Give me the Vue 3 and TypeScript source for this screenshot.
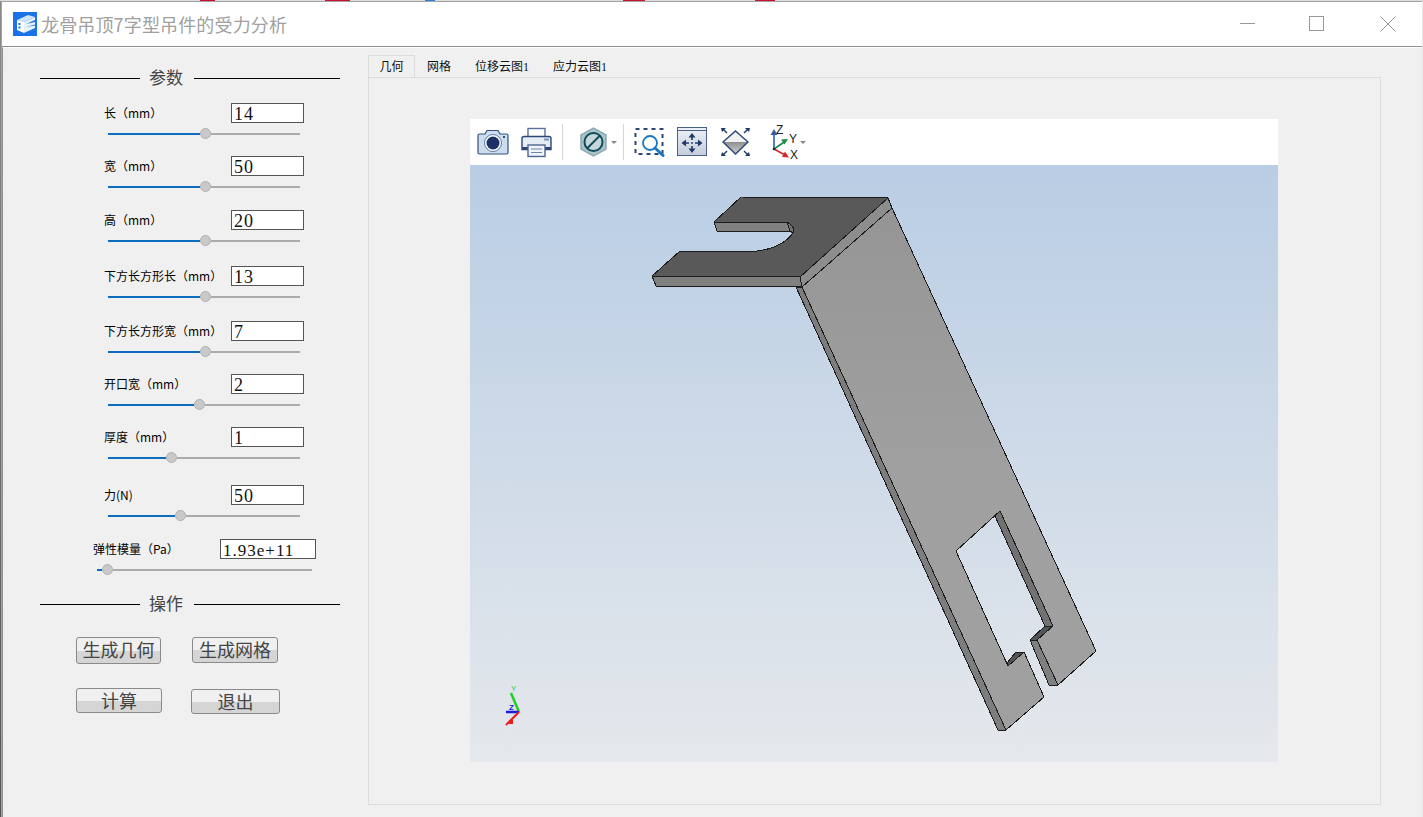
<template>
  <div class="window">
    <header class="titlebar">
      <svg class="app-icon" width="24" height="24" viewBox="0 0 24 24">
        <rect width="24" height="24" fill="#1a73e8" />
        <path d="M4 8 L15 3 L22 5 L11 10 Z" fill="#cfe3fb" />
        <path d="M4 8 L11 10 V21 L4 18 Z" fill="#fff" />
        <path d="M11 10 L22 5 V8 L13 12 L22 10 V12.500 L13 15 L22 13.500 V16 L11 21 Z" fill="#e6f0fd" />
        <path d="M5.500 11 h2 v2 h-2 z M5.500 14.500 h2 v2 h-2 z" fill="#1a73e8" />
      </svg>
      <span class="title">龙骨吊顶7字型吊件的受力分析</span>
      <div class="controls">
        <svg width="16" height="16" viewBox="0 0 16 16"><path d="M0 7.500 H15" stroke="#999" fill="none" /></svg>
        <svg width="16" height="16" viewBox="0 0 16 16"><rect x="0.500" y="0.500" width="14" height="14" stroke="#999" fill="none" /></svg>
        <svg width="16" height="16" viewBox="0 0 16 16"><path d="M0.500 0.500 L15.500 15.500 M15.500 0.500 L0.500 15.500" stroke="#999" fill="none" /></svg>
      </div>
    </header>

    <main class="body">
      <aside class="side">
        <div class="heading heading--params"><i></i><span>参数</span><i></i></div>

        <div
          v-for="row in rows"
          :key="row.label"
          class="row"
          :class="{ 'row--wide': row.wide }"
          :style="{ marginTop: row.gap + 'px' }"
        >
          <div class="row__top">
            <label class="row__label">{{ row.label }}</label>
            <input class="row__input" :value="row.value" readonly />
          </div>
          <div class="slider">
            <div class="slider__fill" :style="{ width: row.fill + 'px' }"></div>
            <div class="slider__thumb"></div>
            <div class="slider__rest"></div>
          </div>
        </div>

        <div class="heading heading--ops"><i></i><span>操作</span><i></i></div>

        <div class="btns btns--first">
          <button class="btn btn--geo">生成几何</button>
          <button class="btn btn--mesh">生成网格</button>
        </div>
        <div class="btns btns--second">
          <button class="btn btn--calc">计算</button>
          <button class="btn btn--exit">退出</button>
        </div>
      </aside>

      <section class="tabs">
        <div class="tabs__bar">
          <div v-for="(tab, i) in tabs" :key="tab" class="tab" :class="{ 'is-active': i === 0 }">{{ tab }}</div>
        </div>
        <div class="pane">
          <div class="viewer">
            <div class="toolbar">
              <!-- camera -->
              <svg class="tool t-camera" width="32" height="32" viewBox="0 0 32 32">
                <path d="M2.500 8 H8 L10 4.500 H21 L23 8 H29.500 Q31 8 31 9.500 V26.500 Q31 28 29.500 28 H2.500 Q1 28 1 26.500 V9.500 Q1 8 2.500 8 Z" fill="#cddcee" stroke="#34507f" stroke-width="1.200" />
                <circle cx="16" cy="17" r="8.500" fill="#fff" stroke="#5b7aa8" />
                <circle cx="16" cy="17" r="6.500" fill="#1c2f66" />
                <rect x="26" y="10" width="2" height="2" fill="#34507f" />
              </svg>
              <!-- printer -->
              <svg class="tool t-printer" width="31" height="32" viewBox="0 0 31 32">
                <rect x="7" y="2.500" width="17" height="9" fill="#fff" stroke="#5a7096" stroke-width="1.400" />
                <path d="M3 10.500 H28 Q30 10.500 30 12.500 V23.500 H1 V12.500 Q1 10.500 3 10.500 Z" fill="#e6ecf4" stroke="#2c4675" stroke-width="1.400" />
                <rect x="23" y="12.500" width="5" height="2" fill="#7f93b1" />
                <path d="M1 21 H30 V23.500 H1 Z" fill="#2c4675" />
                <rect x="7" y="19" width="17" height="11.500" fill="#f0f3f8" stroke="#4e6590" stroke-width="1.400" />
                <path d="M10 23 H21 M10 26.500 H21" stroke="#6f84a6" stroke-width="1.200" />
              </svg>
              <div class="sep sep--a"></div>
              <!-- section hex -->
              <svg class="tool t-hex" width="28" height="32" viewBox="0 0 28 32">
                <path d="M13.500 2 L26 9 V23 L13.500 30 L1 23 V9 Z" fill="#aac2ca" stroke="#88a4ad" stroke-width="1.400" />
                <circle cx="13.500" cy="16" r="9" fill="#c6d6db" stroke="#0f4b58" stroke-width="2" />
                <path d="M7.500 22 L19.500 10" stroke="#0f4b58" stroke-width="2" />
              </svg>
              <svg class="tool t-caret" width="6" height="32" viewBox="0 0 6 32"><path d="M0 15 H6 L3 18 Z" fill="#888" /></svg>
              <div class="sep sep--b"></div>
              <!-- zoom box -->
              <svg class="tool t-zoom" width="31" height="32" viewBox="0 0 31 32">
                <rect x="1.500" y="3" width="27" height="25" fill="none" stroke="#2c4675" stroke-width="2" stroke-dasharray="4 4" />
                <circle cx="16" cy="17" r="7" fill="#fff" stroke="#1b78bd" stroke-width="1.800" />
                <path d="M21 22 L29 29.500" stroke="#1b78bd" stroke-width="3" stroke-linecap="round" />
              </svg>
              <!-- pan -->
              <svg class="tool t-pan" width="30" height="32" viewBox="0 0 30 32">
                <defs>
                  <linearGradient id="panFill" x1="0" y1="0" x2="0" y2="1">
                    <stop offset="0" stop-color="#eef1f6" />
                    <stop offset="1" stop-color="#c3cddc" />
                  </linearGradient>
                </defs>
                <rect x="0.500" y="1.500" width="29" height="28" fill="url(#panFill)" stroke="#4a6288" />
                <path d="M0.500 4.500 H29.500" stroke="#4a6288" />
                <path d="M15 10 V14 M15 20 V24 M7 17 H12 M18 17 H23" stroke="#1f3a68" stroke-width="1.600" />
                <circle cx="15" cy="17" r="0.900" fill="#1f3a68" />
                <path d="M15 7 L11.500 11.500 H18.500 Z M15 27 L11.500 22.500 H18.500 Z M4.500 17 L9 13.500 V20.500 Z M25.500 17 L21 13.500 V20.500 Z" fill="#1f3a68" />
              </svg>
              <!-- fit -->
              <svg class="tool t-fit" width="31" height="32" viewBox="0 0 31 32">
                <defs>
                  <linearGradient id="fitLow" x1="0" y1="0" x2="0" y2="1">
                    <stop offset="0" stop-color="#8e8e8e" />
                    <stop offset="1" stop-color="#d2d2d2" />
                  </linearGradient>
                </defs>
                <path d="M15.500 5 L28 16 H3 Z" fill="#f1f1f1" />
                <path d="M3 16 H28 L15.500 28 Z" fill="url(#fitLow)" />
                <path d="M15.500 5 L28 16 L15.500 28 L3 16 Z" fill="none" stroke="#2c4675" stroke-width="1.400" />
                <path d="M1 2 H6 L4.500 3.500 L7.500 6.500 L6.500 7.500 L3.500 4.500 L2 6 Z M30 2 H25 L26.500 3.500 L23.500 6.500 L24.500 7.500 L27.500 4.500 L29 6 Z M1 30 H6 L4.500 28.500 L7.500 25.500 L6.500 24.500 L3.500 27.500 L2 26 Z M30 30 H25 L26.500 28.500 L23.500 25.500 L24.500 24.500 L27.500 27.500 L29 26 Z" fill="#1f3a68" />
              </svg>
              <!-- axes -->
              <svg class="tool t-axes" width="38" height="36" viewBox="0 0 38 36">
                <g transform="translate(0 2)">
                  <path d="M4 23 V7" stroke="#2f5fae" stroke-width="1.600" />
                  <path d="M4 3 L0.500 9 H7.500 Z" fill="#2f5fae" />
                  <path d="M4 23 L15 15.500" stroke="#1b8c4a" stroke-width="1.600" />
                  <path d="M18 13 L11 13.500 L14.500 18.500 Z" fill="#1b8c4a" />
                  <path d="M4 23 L15 29" stroke="#d9262b" stroke-width="1.600" />
                  <path d="M19 31.500 L12 31 L15 25.500 Z" fill="#d9262b" />
                  <circle cx="4" cy="23" r="1.300" fill="#222" />
                  <path d="M30 15 H36 L33 18 Z" fill="#888" />
                </g>
                <text x="6" y="9.500" class="axis-text">Z</text>
                <text x="19" y="18.500" class="axis-text">Y</text>
                <text x="20" y="34.500" class="axis-text">X</text>
              </svg>
            </div>

            <div class="canvas">
              <!-- canvas origin in page px: 470,165 -->
              <svg class="model" width="808" height="597" viewBox="470 165 808 597">
                <defs>
                  <linearGradient id="plate" x1="0" y1="0" x2="0" y2="1">
                    <stop offset="0" stop-color="#959595" />
                    <stop offset="0.500" stop-color="#a0a0a0" />
                    <stop offset="1" stop-color="#a0a0a0" />
                  </linearGradient>
                </defs>
                <g stroke="#1c1c1c" stroke-width="1" stroke-linejoin="round" shape-rendering="crispEdges">
                  <!-- left side of the long plate -->
                  <path d="M796 287 L802 287 L1006 730 L998 730 Z" fill="#7d7d7d" />
                  <!-- long plate -->
                  <path
                    d="M892 208 L1096 651 L1058 685 L1037 640 L1053 626 L1000 511 L956 551 L1008 666 L1024 652 L1044 697 L1006 730 L802 287 Z"
                    fill="url(#plate)"
                  />
                  <!-- inside faces of the window and slots -->
                  <path d="M995 516 L1000 511 L1053 626 L1045 626 Z" fill="#727272" />
                  <path d="M1030 640 L1037 640 L1053 626 L1045 626 Z" fill="#555" />
                  <path d="M1030 640 L1037 640 L1058 685 L1049 685 Z" fill="#808080" />
                  <path d="M1007 663 L1008 666 L1024 652 L1016 652 Z" fill="#555" />
                  <!-- bend -->
                  <path d="M888 198 L892 208 L802 287 L800 277 Z" fill="#8d8d8d" />
                  <!-- prong edges -->
                  <path d="M652 276 L656 286 L802 287 L800 277 Z" fill="#808080" />
                  <path d="M714 222 L717 231 L790 231 L787 222 Z" fill="#808080" />
                  <path d="M787 222 L793 223 L795 228 L793 233 L790 231 Z" fill="#707070" />
                  <!-- flange top -->
                  <path
                    d="M741 197 L888 198 L800 277 L652 276 L680 251 L757 251 Q782 248 793 233 Q796 227 787 222 L714 222 Z"
                    fill="#595959"
                  />
                </g>
              </svg>

              <!-- small orientation triad -->
              <svg class="triad" width="30" height="42" viewBox="0 0 30 42">
                <path d="M19 27 L11 8" stroke="#1fd11f" stroke-width="2.500" />
                <path d="M19 27 L6 27" stroke="#1a1ae0" stroke-width="2.500" />
                <path d="M19 27 L6 40" stroke="#ee1c1c" stroke-width="2" />
                <path d="M9 35 h4 v4 h-4 z" fill="#ee1c1c" />
                <text x="11" y="6" class="triad__y">Y</text>
                <text x="9" y="25" class="triad__z">Z</text>
              </svg>
            </div>
          </div>
        </div>
      </section>
    </main>
  </div>
</template>

<script setup lang="ts">
interface ParamRow {
  label: string
  value: string
  gap: number
  fill: number
  wide?: boolean
}

// gap = space above the row, fill = blue part of the slider
const rows: ParamRow[] = [
  { label: '长（mm）', value: '14', gap: 13, fill: 92 },
  { label: '宽（mm）', value: '50', gap: 17, fill: 92 },
  { label: '高（mm）', value: '20', gap: 18, fill: 92 },
  { label: '下方长方形长（mm）', value: '13', gap: 20, fill: 92 },
  { label: '下方长方形宽（mm）', value: '7', gap: 19, fill: 92 },
  { label: '开口宽（mm）', value: '2', gap: 17, fill: 86 },
  { label: '厚度（mm）', value: '1', gap: 17, fill: 58 },
  { label: '力(N)', value: '50', gap: 22, fill: 67 },
  { label: '弹性模量（Pa）', value: '1.93e+11', gap: 18, fill: 5, wide: true },
]

const tabs = ['几何', '网格', '位移云图1', '应力云图1']
</script>

<style scoped>
.window {
  box-sizing: border-box;
  width: 1421px;
  height: 816px;
  margin: 1px 0 0 1px;
  background: #fff;
  border-top: 1px solid #a3a3a3;
  border-left: 1px solid #a3a3a3;
  display: flex;
  flex-direction: column;
  font-family: "Noto Sans CJK SC", sans-serif;
}

.titlebar {
  flex: none;
  box-sizing: border-box;
  height: 45px;
  display: flex;
  align-items: center;
  padding-left: 11px;
  border-bottom: 1px solid #8f8f8f;
}

.app-icon {
  flex: none;
}

.title {
  margin-left: 4px;
  font-size: 18px;
  letter-spacing: 0.150px;
  color: #a0a0a0;
}

.controls {
  margin-left: auto;
  margin-right: 26px;
  display: flex;
  gap: 54px;
}

.controls svg:nth-child(2) {
  margin: 0 1px 0 -1px;
}

.body {
  flex: 1;
  min-height: 0;
  display: flex;
  border-top: 1px solid #fff;
  border-left: 1px solid #8f8f8f;
  background: #f0f0f0;
}

.side {
  flex: none;
  width: 365px;
  box-sizing: border-box;
}

.heading {
  width: 300px;
  margin-left: 37px;
  display: flex;
  align-items: center;
  gap: 10px;
  height: 24px;
  font-size: 17px;
  color: #444;
}

.heading span {
  margin-top: -3px;
  margin-left: -1px;
  margin-right: 1px;
}

.heading i {
  display: block;
  height: 1px;
  background: #000;
}

.heading i:first-child {
  width: 100px;
}

.heading i:last-child {
  flex: 1;
}

.heading--params {
  margin-top: 18px;
}

.heading--ops {
  margin-top: 17px;
}

.row__top {
  display: flex;
  align-items: center;
  height: 20px;
  padding-left: 101px;
}

.row__label {
  width: 127px;
  flex: none;
  padding-bottom: 2px;
  font-size: 12px;
  color: #000;
  white-space: nowrap;
}

.row__input {
  box-sizing: border-box;
  width: 73px;
  height: 20px;
  padding: 3px 2px 0;
  border: 1px solid #555;
  border-radius: 0;
  background: #fff;
  outline: none;
  font-family: "Liberation Serif", serif;
  font-size: 18px;
  letter-spacing: 1px;
  color: #111;
}

.slider {
  display: flex;
  align-items: center;
  width: 192px;
  height: 11px;
  margin-top: 5px;
  margin-left: 105px;
}

.slider__fill {
  height: 2px;
  background: #0d6cbd;
}

.slider__thumb {
  flex: none;
  box-sizing: border-box;
  width: 11px;
  height: 11px;
  border-radius: 50%;
  background: #c9c9c9;
  border: 1px solid #b0b0b0;
}

.slider__rest {
  flex: 1;
  height: 2px;
  background: #ababab;
}

.row--wide .row__top {
  padding-left: 90px;
}

.row--wide .row__input {
  width: 96px;
  font-size: 17px;
}

.row--wide .slider {
  width: 215px;
  margin-left: 94px;
}

.btns {
  display: flex;
  padding-left: 73px;
}

.btns--first {
  margin-top: 21px;
  gap: 31px;
  align-items: flex-start;
}

.btns--second {
  margin-top: 24px;
  gap: 29px;
}

.btn {
  box-sizing: border-box;
  height: 26px;
  width: 85px;
  padding: 0 0 4px;
  border: 1px solid #8a8a8a;
  border-radius: 3px;
  background: linear-gradient(#f0f0f0 0 51%, #d5d5d5 51% 100%);
  font-family: "Noto Sans CJK SC", sans-serif;
  font-size: 18px;
  line-height: 22px;
  color: #444;
}

.btn--geo {
  height: 27px;
}

.btn--mesh {
  width: 86px;
}

.btn--calc {
  width: 86px;
  height: 25px;
}

.btn--exit {
  width: 89px;
  height: 25px;
  margin-top: 1px;
}

.tabs {
  flex: none;
  width: 1013px;
  display: flex;
  flex-direction: column;
  padding-top: 7px;
}

.tabs__bar {
  display: flex;
  height: 22px;
  box-sizing: border-box;
}

.tab {
  padding: 0 12px;
  font-family: "Liberation Serif", "Noto Sans CJK SC", serif;
  font-size: 12px;
  line-height: 25px;
  color: #111;
  white-space: nowrap;
}

.tab.is-active {
  padding: 0;
  box-sizing: border-box;
  width: 47px;
  height: 23px;
  border: 1px solid #dcdcdc;
  border-bottom: none;
  line-height: 23px;
  text-align: center;
}

.pane {
  box-sizing: border-box;
  height: 728px;
  padding: 41px 0 0 101px;
  border: 1px solid #dcdcdc;
}

.viewer {
  width: 808px;
  height: 643px;
  display: flex;
  flex-direction: column;
}

.toolbar {
  flex: none;
  height: 46px;
  background: #fff;
  display: flex;
  align-items: center;
  padding-left: 7px;
}

.tool {
  flex: none;
}

.t-printer {
  margin-left: 12px;
}

.t-hex {
  margin-left: 17px;
}

.t-caret {
  margin-left: 3px;
}

.t-zoom {
  margin-left: 10px;
}

.t-pan {
  margin-left: 12px;
}

.t-fit {
  margin-left: 13px;
}

.t-axes {
  margin-left: 19px;
}

.sep {
  flex: none;
  width: 1px;
  height: 36px;
  background: #d6d6d6;
}

.sep--a {
  margin-left: 10px;
}

.sep--b {
  margin-left: 6px;
}

.axis-text {
  font-family: "Liberation Sans", sans-serif;
  font-size: 12px;
  fill: #222;
}

.canvas {
  flex: 1;
  position: relative;
  background: linear-gradient(#b9cde4, #e5e8ec);
}

.model {
  display: block;
}

.triad {
  position: absolute;
  left: 30px;
  top: 520px;
}

.triad__y {
  font-family: "Liberation Sans", sans-serif;
  font-size: 8px;
  fill: #1fd11f;
}

.triad__z {
  font-family: "Liberation Sans", sans-serif;
  font-size: 8px;
  font-weight: 700;
  fill: #1a1ae0;
}
</style>

<style>
html,
body {
  margin: 0;
  overflow: hidden;
}

/* what shows of the desktop around the window: top pixel row and left pixel column */
body {
  height: 817px;
  background:
    linear-gradient(to right,
      #dcdcdc 200px, #c8102e 200px 215px, #dcdcdc 215px 325px, #c8102e 325px 350px,
      #dcdcdc 350px 425px, #2f7fd6 425px 435px, #dcdcdc 435px 623px, #c8102e 623px 645px,
      #dcdcdc 645px 755px, #c8102e 755px 775px, #dcdcdc 775px) top left / 100% 1px no-repeat,
    linear-gradient(#8a8a8a, #555) top left / 1px 100% no-repeat,
    #e6e6e6;
}
</style>
